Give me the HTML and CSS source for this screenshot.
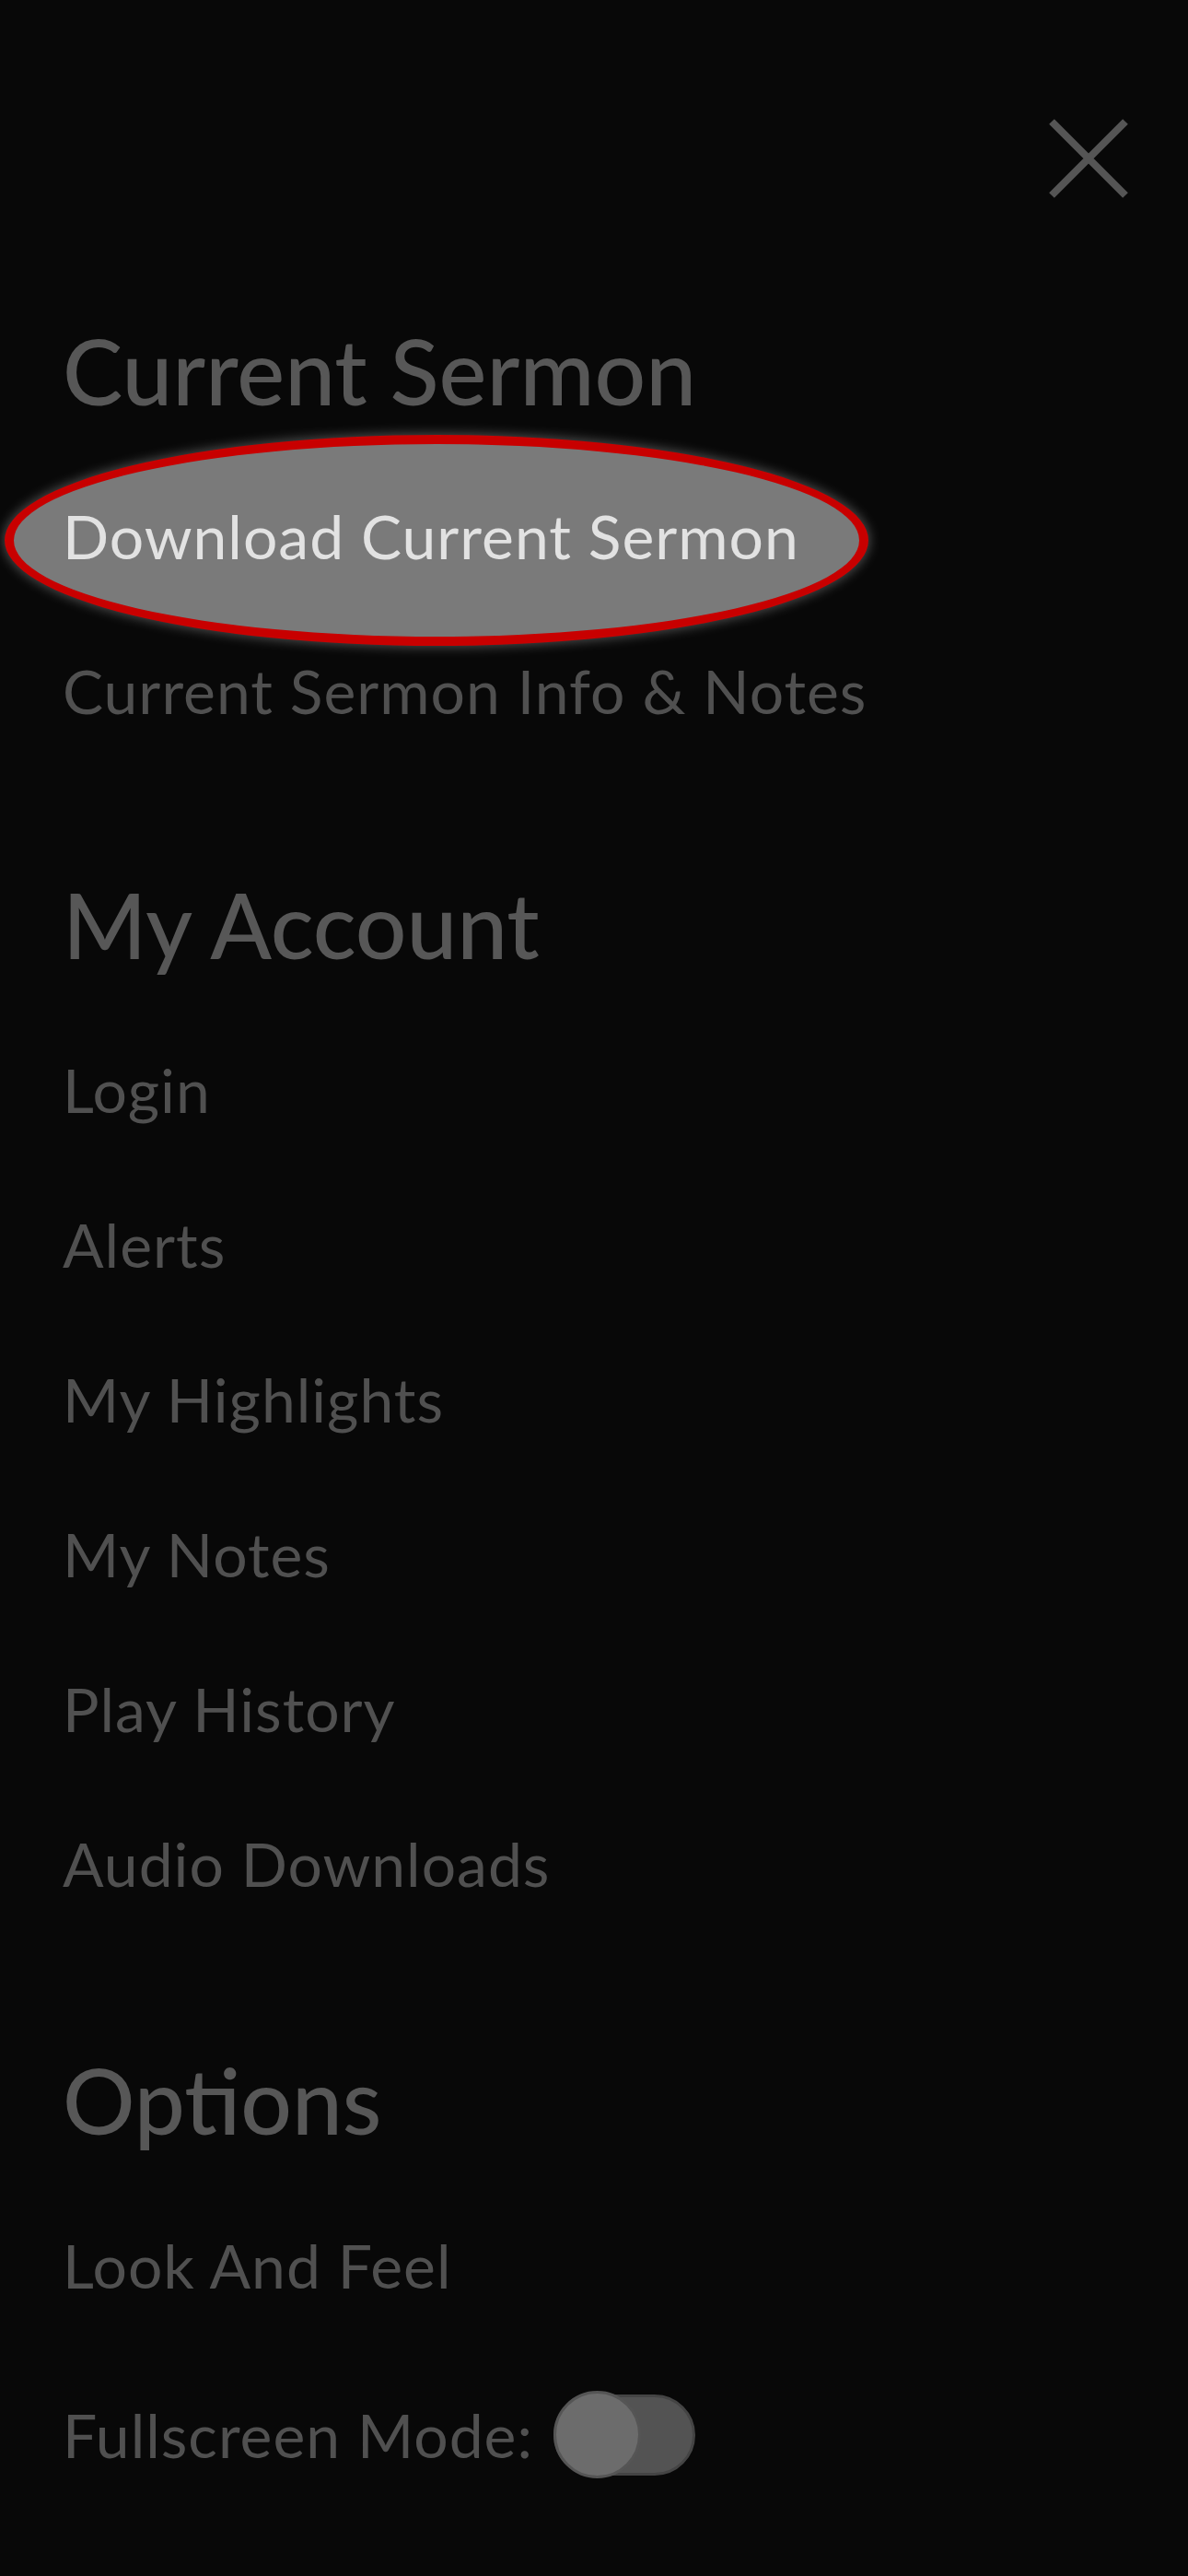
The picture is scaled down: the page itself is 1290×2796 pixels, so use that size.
FILE: index.html
```html
<!DOCTYPE html>
<html lang="en">

<head>
    <meta charset="UTF-8">
    <meta name="viewport" content="width=device-width, initial-scale=1.0">
    <title>Menu</title>
    <link rel="stylesheet" href="styles.css">
</head>

<body>
    <div class="menu-panel">
        <header class="menu-header">
            <button class="close-btn" type="button" aria-label="Close">
                <svg width="86" height="86" viewBox="0 0 86 86">
                    <path d="M3 3 L83 83 M83 3 L3 83" stroke="#555" stroke-width="8" fill="none" />
                </svg>
            </button>
        </header>

        <!-- Current sermon -->
        <section class="menu-section">
            <h2 class="menu-title">Current Sermon</h2>
            <ul class="menu-list">
                <li class="menu-item"><span class="highlight">Download Current Sermon</span></li>
                <li class="menu-item">Current Sermon Info &amp; Notes</li>
            </ul>
        </section>

        <!-- Account -->
        <section class="menu-section">
            <h2 class="menu-title">My Account</h2>
            <ul class="menu-list">
                <li class="menu-item">Login</li>
                <li class="menu-item">Alerts</li>
                <li class="menu-item">My Highlights</li>
                <li class="menu-item">My Notes</li>
                <li class="menu-item">Play History</li>
                <li class="menu-item">Audio Downloads</li>
            </ul>
        </section>

        <!-- Options -->
        <section class="menu-section">
            <h2 class="menu-title">Options</h2>
            <ul class="menu-list">
                <li class="menu-item">Look And Feel</li>
                <li class="menu-item toggle-row">
                    <span>Fullscreen Mode:</span>
                    <span class="toggle"><span class="toggle-knob"></span></span>
                </li>
            </ul>
        </section>
    </div>
</body>

</html>
```

FILE: styles.css
```css
html,
body {
    margin: 0;
    padding: 0;
    background-color: #080808;
}

body {
    font-family: Lato, "Noto Sans", sans-serif;
    color: #505050;
}

.menu-panel {
    min-height: 2796px;
    padding-left: 68px;
    box-sizing: border-box;
}

.menu-header {
    display: flex;
    justify-content: flex-end;
    padding-top: 129px;
    padding-right: 65px;
    margin-bottom: 127px;
}

.close-btn {
    background: none;
    border: none;
    padding: 0;
    width: 86px;
    height: 86px;
    cursor: pointer;
}

.close-btn svg {
    display: block;
}

.menu-section + .menu-section {
    margin-top: 109px;
}

.menu-section:last-child {
    margin-top: 112px;
}

.menu-title {
    margin: 0 0 36px;
    font-size: 98px;
    line-height: 120px;
    font-weight: 500;
    color: #575757;
}

.menu-list {
    list-style: none;
    margin: 0;
    padding: 0;
}

.menu-item {
    font-size: 66px;
    line-height: 168px;
    font-weight: 400;
    letter-spacing: 1px;
    color: #505050;
}

/* highlighted entry with red ring */
.highlight {
    position: relative;
    z-index: 0;
    color: #e2e2e2;
}

.highlight::before {
    content: "";
    position: absolute;
    z-index: -1;
    left: -63px;
    right: -75px;
    top: -70px;
    bottom: -80px;
    box-sizing: border-box;
    border: 10px solid #c80000;
    border-radius: 50%;
    background-color: #7a7a7a;
    box-shadow: 0 0 14px rgba(255, 255, 255, 0.35);
}

.toggle-row {
    display: flex;
    align-items: center;
    gap: 22px;
    margin-top: 56px;
    line-height: 1.2;
}

.toggle {
    position: relative;
    display: block;
    width: 154px;
    height: 88px;
    box-sizing: border-box;
    background-color: #535353;
    border: 3px solid #444;
    border-radius: 44px;
}

.toggle-knob {
    position: absolute;
    left: -3px;
    top: -7px;
    width: 95px;
    height: 95px;
    box-sizing: border-box;
    background-color: #6c6c6c;
    border: 3px solid #555;
    border-radius: 50%;
}
```
